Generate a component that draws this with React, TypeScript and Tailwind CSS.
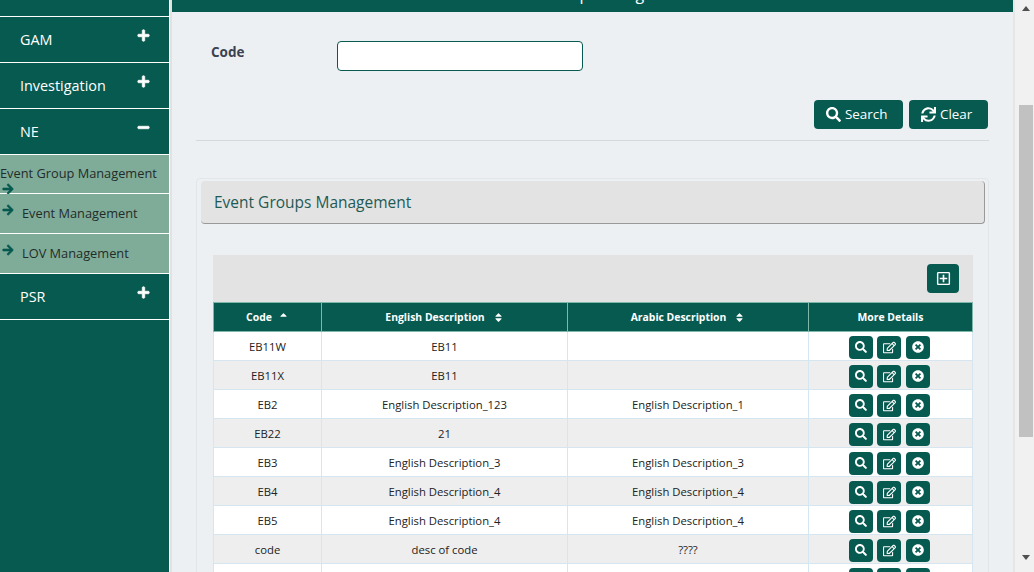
import { FaArrowRight, FaMinus, FaPlus, FaRegEdit, FaRegPlusSquare, FaSearch, FaSort, FaSortUp, FaSync, FaTimesCircle } from "react-icons/fa"

const ROWS = [
    ["EB11W", "EB11", ""],
    ["EB11X", "EB11", ""],
    ["EB2", "English Description_123", "English Description_1"],
    ["EB22", "21", ""],
    ["EB3", "English Description_3", "English Description_3"],
    ["EB4", "English Description_4", "English Description_4"],
    ["EB5", "English Description_4", "English Description_4"],
    ["code", "desc of code", "????"],
    ["", "", ""],
]

const MenuItem = ({ label, open = false }: any) => (
    <div className="h-[46px] shrink-0 border-b border-white flex text-white">
        <div className="pl-5 pt-[13px] text-[14.4px] leading-[20px] flex-1">{label}</div>
        <div className="pr-[19px] pt-[12px] text-[13px]">{open ? <FaMinus className="stroke-[30px]" /> : <FaPlus className="stroke-[30px]" />}</div>
    </div>
)

const SubItem = ({ label, first = false }: any) => (
    first ? (
        <div className="h-[39px] shrink-0 bg-[#7fab99] border-b border-white text-[#1f2d2a] text-[12.8px] leading-[18px] pt-[9px]">
            <div className="whitespace-nowrap">{label}</div>
            <FaArrowRight className="text-[#075a50] text-[12px] stroke-[30px] ml-[2px] mt-[1px]" />
        </div>
    ) : (
        <div className="h-[40px] shrink-0 bg-[#7fab99] border-b border-white flex text-[#1f2d2a] text-[12.8px]">
            <FaArrowRight className="text-[#075a50] text-[12px] stroke-[30px] ml-[2px] mt-[10px]" />
            <div className="pl-[8px] pt-[10px] leading-[18px]">{label}</div>
        </div>
    )
)

const IconBtn = ({ children }: any) => (
    <div className="w-6 h-[23px] bg-[#075a50] rounded-[4px] text-white flex items-center justify-center">{children}</div>
)

export default function App() {
    return (
        <div className="h-screen w-screen overflow-hidden flex bg-white text-[#333] [font-family:'Open_Sans',sans-serif]">
            {/* left menu */}
            <div className="w-[170px] shrink-0 bg-[#075a50] border-r border-white flex flex-col">
                <div className="h-[17px] shrink-0 border-b border-white" />
                <MenuItem label="GAM" />
                <MenuItem label="Investigation" />
                <MenuItem label="NE" open />
                <SubItem label="Event Group Management" first />
                <SubItem label="Event Management" />
                <SubItem label="LOV Management" />
                <MenuItem label="PSR" />
            </div>
            <div className="w-[2px] shrink-0 bg-[#e2e2e2]" />

            {/* page */}
            <div className="w-[841px] shrink-0 bg-[#edf0f3] flex flex-col">
                <div className="h-[12px] shrink-0 bg-[#075a50] overflow-hidden flex justify-center items-end">
                    <div className="text-white text-[16px] leading-[20px] -translate-y-[8px] pl-[4px] whitespace-nowrap">Event Group Management</div>
                </div>

                <div className="pl-[39px] pt-[29px] flex">
                    <div className="w-[126px] text-[13.5px] font-bold leading-[22px] text-[#3b4252]">Code</div>
                    <input className="w-[246px] h-[30px] bg-white border border-[#075a50] rounded-[4px]" />
                </div>

                <div className="flex justify-end gap-[6px] pr-[25px] mt-[29px]">
                    <div className="h-[29px] w-[89px] bg-[#075a50] rounded-[4px] text-white text-[13.4px] flex items-center pl-[12px] gap-[4px]">
                        <FaSearch className="text-[15px]" />
                        <span>Search</span>
                    </div>
                    <div className="h-[29px] w-[79px] bg-[#075a50] rounded-[4px] text-white text-[13.4px] flex items-center pl-[12px] gap-[4px]">
                        <FaSync className="text-[15px]" />
                        <span>Clear</span>
                    </div>
                </div>

                <div className="ml-[24px] mr-[24px] mt-[11px] border-t border-[#d5d8dc]" />

                <div className="ml-[24px] mr-[24px] mt-[37px] border border-[#e3e6e9] rounded-[4px] px-[4px] pt-[2px] flex-1">
                    <div className="h-[43px] mr-[-1px] bg-[#e3e3e3] border-b border-r border-[#999] rounded-[4px] pl-[13px] pt-[10px] text-[15.5px] font-medium leading-[22px] text-[#1f5a55]">
                        Event Groups Management
                    </div>

                    <div className="ml-[12px] mt-[31px]">
                        <div className="w-[760px] h-[47px] bg-[#e3e3e3] flex justify-end pr-[14px] pt-[9px]">
                            <div className="w-8 h-[29px] bg-[#075a50] rounded-[4px] text-white text-[15px] flex items-center justify-center">
                                <FaRegPlusSquare />
                            </div>
                        </div>
                        <table className="w-[760px] table-fixed border-collapse text-[11.3px]">
                            <thead>
                                <tr className="h-[29px] bg-[#075a50] text-white text-[10.4px]">
                                    <th className="w-[108px] pt-[2px] border border-[#7fb8a8] font-bold">
                                        <span className="inline-flex items-center gap-[6px]">Code <FaSortUp className="text-[11px]" /></span>
                                    </th>
                                    <th className="w-[246px] pt-[2px] border border-[#7fb8a8] font-bold">
                                        <span className="inline-flex items-center gap-[8px]">English Description <FaSort className="text-[11px]" /></span>
                                    </th>
                                    <th className="w-[241px] pt-[2px] border border-[#7fb8a8] font-bold">
                                        <span className="inline-flex items-center gap-[8px]">Arabic Description <FaSort className="text-[11px]" /></span>
                                    </th>
                                    <th className="pt-[2px] border border-[#7fb8a8] font-bold">More Details</th>
                                </tr>
                            </thead>
                            <tbody>
                                {ROWS.map((aRow: any, index: any) => (
                                    <tr key={index} className={`h-[29px] text-center text-[#222] ${index % 2 == 0 ? "bg-white" : "bg-[#eeeeee]"}`}>
                                        <td className="pt-[2px] border border-[#d6e6f0]">{aRow[0]}</td>
                                        <td className="pt-[2px] border border-[#d6e6f0]">{aRow[1]}</td>
                                        <td className="pt-[2px] border border-[#d6e6f0]">{aRow[2]}</td>
                                        <td className="pt-[2px] border border-[#d6e6f0]">
                                            <div className="flex pl-[40px]">
                                                <IconBtn><FaSearch className="text-[12px]" /></IconBtn>
                                                <div className="ml-[4px]"><IconBtn><FaRegEdit className="text-[13px]" /></IconBtn></div>
                                                <div className="ml-[5px]"><IconBtn><FaTimesCircle className="text-[12px]" /></IconBtn></div>
                                            </div>
                                        </td>
                                    </tr>
                                ))}
                            </tbody>
                        </table>
                    </div>
                </div>
            </div>

            {/* scrollbar */}
            <div className="w-[4px] shrink-0 bg-[#f1f1f1] border-l-2 border-[#e6e6e6]" />
            <div className="flex-1 bg-[#f1f1f1] flex flex-col items-center">
                <div className="mt-[6px] w-0 h-0 border-x-[4px] border-x-transparent border-b-[5px] border-b-[#505050]" />
                <div className="w-[14px] h-[332px] mt-[94px] bg-[#c1c1c1]" />
                <div className="mt-[118px] w-0 h-0 border-x-[4px] border-x-transparent border-t-[5px] border-t-[#505050]" />
            </div>
        </div>
    )
}
